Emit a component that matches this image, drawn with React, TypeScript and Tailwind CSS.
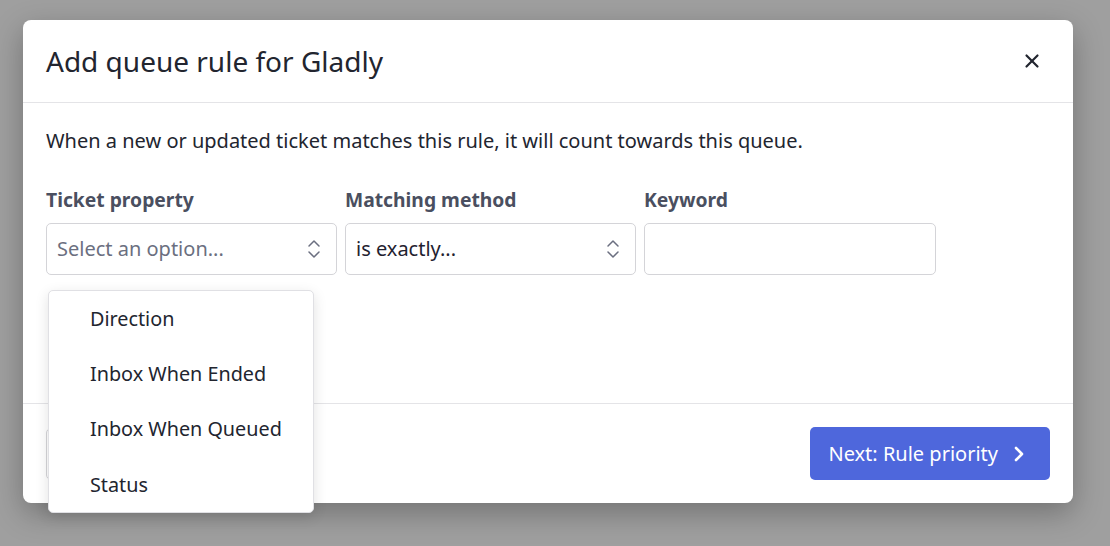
import React from 'react';
import { X, ChevronRight, ChevronsUpDown } from 'lucide-react';

const options = ['Direction', 'Inbox When Ended', 'Inbox When Queued', 'Status'];

function SelectBox({ value, placeholder }: { value?: string; placeholder?: string }) {
  return (
    <div className="flex h-[52px] w-[291px] items-center justify-between rounded-[5px] border border-[#d4d4d8] bg-white pl-[10px] pr-[10px]">
      <span className={`text-[20px] ${value ? 'text-[#1f2230]' : 'text-[#6b6f80]'}`}>{value ?? placeholder}</span>
      <ChevronsUpDown className="h-[24px] w-[24px] text-[#6b6f80]" strokeWidth={1.5} />
    </div>
  );
}

export default function App() {
  return (
    <div
      className="relative h-[546px] w-[1110px] overflow-hidden bg-[#9f9f9f]"
      style={{ fontFamily: '"Noto Sans", "Liberation Sans", sans-serif' }}
    >
      <div className="absolute left-[23px] top-[20px] w-[1050px] rounded-[8px] bg-white shadow-[0_10px_30px_rgba(0,0,0,0.28)]">
        {/* header */}
        <div className="flex h-[83px] items-center justify-between border-b border-[#e4e4e7] pl-[23px] pr-[30px]">
          <h1 className="text-[28px] text-[#22252f]">Add queue rule for Gladly</h1>
          <X className="h-[22px] w-[22px] text-[#22252f]" strokeWidth={2.4} />
        </div>

        {/* body */}
        <div className="h-[301px] border-b border-[#e4e4e7] px-[23px] pt-[23px]">
          <p className="text-[20px] leading-[30px] text-[#22252f]">
            When a new or updated ticket matches this rule, it will count towards this queue.
          </p>
          <div className="mt-[30px] flex gap-[8px]">
            <div className="flex flex-col gap-[9px]">
              <label className="text-[19.3px] font-bold leading-[28px] text-[#4a4f60]">Ticket property</label>
              <SelectBox placeholder="Select an option..." />
            </div>
            <div className="flex flex-col gap-[9px]">
              <label className="text-[19.3px] font-bold leading-[28px] text-[#4a4f60]">Matching method</label>
              <SelectBox value="is exactly..." />
            </div>
            <div className="flex flex-col gap-[9px]">
              <label className="text-[19.3px] font-bold leading-[28px] text-[#4a4f60]">Keyword</label>
              <div className="h-[52px] w-[292px] rounded-[5px] border border-[#d4d4d8] bg-white" />
            </div>
          </div>
        </div>

        {/* footer */}
        <div className="flex h-[99px] items-center justify-between px-[23px]">
          <button className="h-[52px] w-[120px] rounded-[5px] border border-[#d4d4d8] bg-white" />
          <button className="flex h-[53px] items-center gap-[9px] rounded-[5px] bg-[#4e67dc] pl-[18px] pr-[19px] text-[20px] text-white">
            Next: Rule priority
            <ChevronRight className="h-[24px] w-[24px]" strokeWidth={2.6} />
          </button>
        </div>
      </div>

      {/* dropdown menu */}
      <div className="absolute left-[48px] top-[290px] w-[266px] rounded-[5px] border border-[#e0e0e4] bg-white shadow-[0_4px_14px_rgba(0,0,0,0.12)]">
        {options.map((o) => (
          <div key={o} className="flex h-[55.25px] items-center pl-[41px] text-[19.8px] text-[#22252f]">
            {o}
          </div>
        ))}
      </div>
    </div>
  );
}
